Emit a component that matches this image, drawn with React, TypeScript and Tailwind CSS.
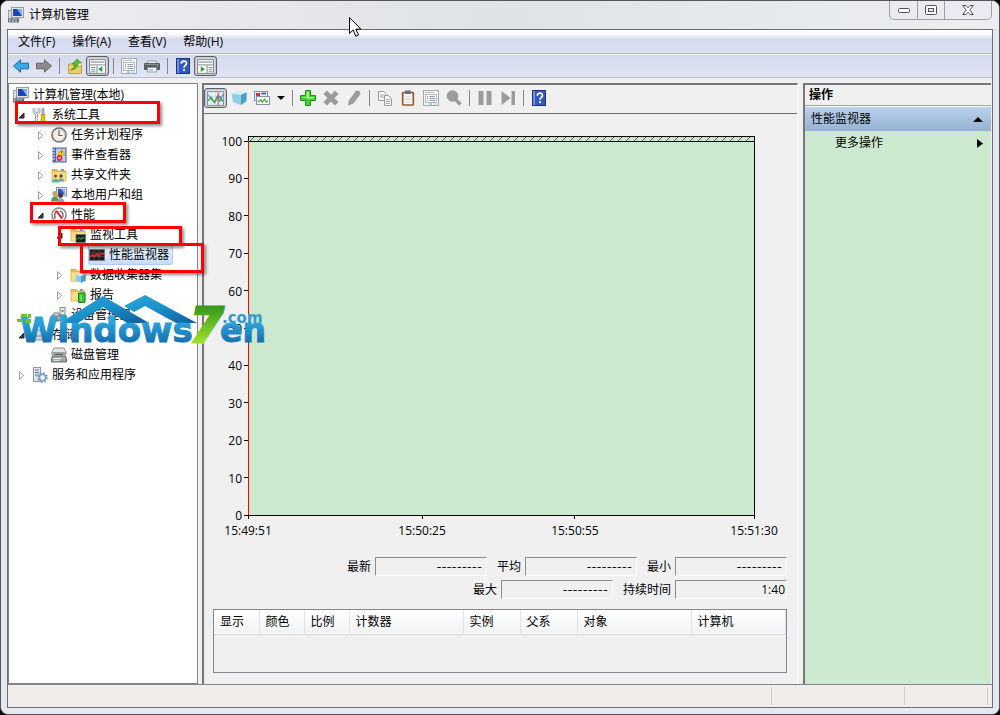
import type { ReactNode } from "react"

// ---------- icons ----------

const Svg = ({ children, size = 16 }: { children: ReactNode; size?: number }) => (
  <svg width={size} height={size} viewBox="0 0 16 16" className="shrink-0" aria-hidden="true">
    {children}
  </svg>
)

const ComputerIcon = () => (
  <Svg>
    <rect x="0.5" y="3.5" width="4" height="8" fill="#d8dde2" stroke="#9aa2a9" />
    <rect x="3.5" y="0.5" width="12" height="10" fill="#e4e7ea" stroke="#959ca3" />
    <rect x="5" y="2" width="9" height="7" fill="#1a45b4" />
    <path d="M9 2h5v7z" fill="#7fb0f5" />
    <path d="M7.500 10.500h4l1 1.500h-6z" fill="#a7b0b8" />
    <rect x="0" y="11.500" width="11" height="4" fill="#66717b" />
    <path d="M1 12.800h9M1 14.300h9" stroke="#d2d7dc" strokeDasharray="2 1" strokeWidth="0.800" />
  </Svg>
)

const ToolsIcon = () => (
  <Svg>
    <path d="M2 1v4l2.500 2L7 5V1M4.500 6.500V15" fill="none" stroke="#85898e" strokeWidth="2.600" />
    <path d="M2 1v4l2.500 2L7 5V1M4.500 6.500V15" fill="none" stroke="#eceeef" strokeWidth="1.200" />
    <path d="M11 0l1.500 2v6h-3V2z" fill="#a5aab0" />
    <path d="M9 7.500h4L12.500 10l.800 5h-4.600l.800-5z" fill="#f4b90a" stroke="#b57b00" strokeWidth="0.600" />
  </Svg>
)

const ClockIcon = () => (
  <Svg>
    <circle cx="8" cy="8" r="7.100" fill="#f5efdc" stroke="#6d7178" strokeWidth="1.500" />
    <circle cx="8" cy="8" r="5.700" fill="none" stroke="#c9cdd2" strokeWidth="0.900" />
    <path d="M8 3.200V8.500h3.500" fill="none" stroke="#4e6684" strokeWidth="1.200" />
  </Svg>
)

const EventIcon = () => (
  <Svg>
    <rect x="2" y="1" width="13" height="14" fill="#b9cdec" stroke="#3b5a94" />
    <rect x="2" y="1" width="3" height="14" fill="#4a6dac" />
    <path d="M1 3h3M1 6h3M1 9h3M1 12h3" stroke="#e6e9ee" />
    <path d="M10.500 1.500l3.800 6.500H6.700z" fill="#ffd21f" stroke="#b98700" strokeWidth="0.500" />
    <path d="M10.500 4v2.200" stroke="#333" strokeWidth="0.900" />
    <circle cx="8.500" cy="11" r="2.900" fill="#d8262c" />
    <path d="M7.300 9.800l2.400 2.400M9.700 9.800l-2.400 2.400" stroke="#fff" strokeWidth="0.900" />
  </Svg>
)

const FolderShape = () => (
  <>
    <path d="M1 2.500h5l1 1.500h8v10H1z" fill="#e6bd55" stroke="#c39b46" strokeWidth="0.700" />
    <path d="M1.400 5.200h13.200v8.500H1.400z" fill="#f8dd8b" />
    <path d="M10 2h3v2h-3z" fill="#5fa7dc" />
  </>
)

const SharedIcon = () => (
  <Svg>
    <FolderShape />
    <circle cx="4.500" cy="9" r="1.700" fill="#8a5a2e" />
    <path d="M1 15.500c0-5 7-5 7 0z" fill="#57b894" />
    <circle cx="10" cy="9" r="1.700" fill="#6d4321" />
    <path d="M7 14.500c0-4.500 6-4.500 6 0z" fill="#6fa8a0" />
  </Svg>
)

const UsersIcon = () => (
  <Svg>
    <rect x="5.500" y="0.500" width="10" height="8.500" fill="#dfe4ea" stroke="#8a929b" />
    <rect x="7" y="2" width="7" height="5.500" fill="#2457c5" />
    <path d="M10 2h4v5.500z" fill="#86b3f2" />
    <circle cx="4" cy="6.500" r="2.600" fill="#c9a066" />
    <path d="M0 14.500c0-7 8-7 8 0z" fill="#5c9a58" />
    <circle cx="9.500" cy="8.500" r="2.400" fill="#4b3527" />
    <path d="M6 15.500c0-6 7.500-6 7.500 0z" fill="#8fa7b4" />
  </Svg>
)

const GaugeIcon = () => (
  <Svg>
    <circle cx="8" cy="8" r="7.100" fill="#fff" stroke="#85898e" strokeWidth="1.500" />
    <path d="M4.200 11.500C3 8 4 4.500 6 4" fill="none" stroke="#b33" strokeWidth="1.400" />
    <path d="M5.500 4l5.500 7.500" stroke="#d11f1f" strokeWidth="2" />
    <path d="M9 4c3 .500 3.500 4 2.800 6.500" fill="none" stroke="#555" strokeWidth="1.200" />
  </Svg>
)

const FolderChartIcon = () => (
  <Svg>
    <FolderShape />
    <rect x="6" y="7.500" width="9.500" height="8" fill="#14201a" stroke="#6e7479" strokeWidth="0.700" />
    <path d="M7 12.500l2-2 2 2 1.500-2.500 2 2" fill="none" stroke="#35d04a" />
  </Svg>
)

const MonitorIcon = () => (
  <Svg>
    <rect x="0.500" y="2.500" width="15" height="11" fill="#221a1c" stroke="#7c7c80" />
    <path d="M1 6h14M1 9.500h14M5 3v10M10 3v10" stroke="#6c5a5c" strokeWidth="0.600" />
    <path d="M1 10l2.500-2 2 1.500L8 7l2 2 2.500-2.500L15 7" fill="none" stroke="#ea2b33" strokeWidth="1.400" />
  </Svg>
)

const FolderCubeIcon = () => (
  <Svg>
    <FolderShape />
    <path d="M6 8l5-1.500L15.500 8v5.500L11 15.800 6 14z" fill="#8cc9ea" />
    <path d="M6 8l5 1.300L15.500 8 11 6.500z" fill="#dff3fb" />
    <path d="M11 9.300v6.500l4.500-2.300V8z" fill="#4a9cc8" />
  </Svg>
)

const ReportIcon = () => (
  <Svg>
    <FolderShape />
    <rect x="8.500" y="6" width="6.500" height="9.500" rx="0.500" fill="#35c935" stroke="#137d1b" />
    <path d="M10 8h2v6h-2z" fill="#62dd5a" />
  </Svg>
)

const DeviceIcon = () => (
  <Svg>
    <rect x="9" y="0.500" width="5" height="8" fill="#e5e8ea" stroke="#8b9196" />
    <path d="M10.500 3h2v2h-2z" fill="#4cae4f" />
    <path d="M1 8h13l1.500 3v3H.500v-3z" fill="#a3a9af" stroke="#666c72" />
    <path d="M3 6h5v3H3zM3 13h9" fill="#dfe3e6" stroke="#71777d" />
  </Svg>
)

const StorageIcon = () => (
  <Svg>
    <path d="M3 3h10l2 6v4H1V9z" fill="#d3d8dd" stroke="#858b91" />
    <path d="M1 9h14" stroke="#858b91" />
    <circle cx="12.500" cy="11" r="1" fill="#39b54a" />
  </Svg>
)

const DiskIcon = () => (
  <Svg>
    <path d="M3 1h10l2 4v3H1V5z" fill="#e3e6e8" stroke="#8a9095" />
    <path d="M1.500 6h13M4 7.500h8" stroke="#53585d" />
    <path d="M1.500 9h13l1 2.500V15H.500v-3.500z" fill="#9ca2a7" stroke="#6a7075" />
    <path d="M2.500 11.500h8M2.500 13.300h6" stroke="#eef0f2" />
    <circle cx="13" cy="12.800" r="0.900" fill="#5fe05f" />
  </Svg>
)

const ServicesIcon = () => (
  <Svg>
    <rect x="1.500" y="0.500" width="7" height="14" fill="#dfe3e7" stroke="#8f969c" />
    <path d="M3 3h4M3 5.500h4M3 8h4" stroke="#5f7d99" />
    <circle cx="10.500" cy="10.500" r="3.200" fill="#fff" stroke="#7ba4cf" strokeWidth="2" />
    <circle cx="10.500" cy="10.500" r="4.700" fill="none" stroke="#6a93bf" strokeWidth="1.400" strokeDasharray="1.800 1.900" />
  </Svg>
)

const ArrowIcon = ({ back }: { back?: boolean }) => (
  <Svg>
    {back ? (
      <path d="M0.500 8L7.500 1.800v3.400h8v5.600h-8v3.400z" fill="#3fa9e8" stroke="#1d6aa8" />
    ) : (
      <path d="M15.500 8l-7-6.200v3.400h-8v5.600h8v3.400z" fill="#8c8c8c" stroke="#686868" />
    )}
  </Svg>
)

const FolderUpIcon = () => (
  <Svg>
    <path d="M1.500 6h4l1 1.500h8v8h-13z" fill="#f3ce6f" stroke="#c39a3f" />
    <path d="M10 4.500h4.500v4H10z" fill="#f8e3a3" stroke="#c39a3f" strokeWidth="0.700" />
    <path d="M3.500 12c3-1 4-3.500 4-6H5l5-5 4 3.500-3 1C11 9.500 8 12 3.500 12z" fill="#57bf33" stroke="#2f8a1c" strokeWidth="0.600" />
  </Svg>
)

const PaneIcon = ({ right }: { right?: boolean }) => (
  <Svg size={17}>
    <rect x="0.500" y="1.500" width="15" height="13" fill="#fff" stroke="#8a9098" />
    <path d="M1.500 3.800h13" stroke="#a7adb5" strokeWidth="1.500" />
    <path d="M0.500 6.500h15" stroke="#8a9098" />
    {right ? (
      <>
        <path d="M9.500 7v7" stroke="#8a9098" />
        <path d="M3.500 7.800v5.400l4-2.700z" fill="#28a428" />
        <path d="M11 9h3.500M11 11h3.500M11 13h3.500" stroke="#8a9098" />
      </>
    ) : (
      <>
        <path d="M7.500 7v7" stroke="#8a9098" />
        <path d="M12.500 7.800v5.400l-4-2.700z" fill="#28a428" />
        <path d="M2 9h4M2 11h4M2 13h4" stroke="#8a9098" />
      </>
    )}
  </Svg>
)

const PropertiesIcon = () => (
  <Svg>
    <rect x="0.500" y="0.500" width="15" height="15" fill="#fafafa" stroke="#a4a9ae" />
    <path d="M2 2.500h9" stroke="#b8bdc2" />
    <rect x="2.500" y="4.500" width="11" height="8" fill="#fff" stroke="#a0a8b0" strokeWidth="0.800" />
    <path d="M4 6.500h1M6.500 6.500H12M4 8.500h1M6.500 8.500H12M4 10.500h1M6.500 10.500H12" stroke="#8b9db4" />
    <path d="M6 14h3" stroke="#2cb6d8" />
    <path d="M10.500 14h3" stroke="#9fc6d8" />
  </Svg>
)

const PrinterIcon = () => (
  <Svg>
    <path d="M3.500 3h9v4h-9z" fill="#f4f4f4" stroke="#9a9a9a" />
    <path d="M0.500 5.500h15v6H.500z" fill="#5a5d62" stroke="#414449" strokeWidth="0.700" />
    <path d="M1 6.500h14" stroke="#8b8e93" />
    <path d="M3.500 9.500h9v4.500h-9z" fill="#f2f7fb" stroke="#8c9299" strokeWidth="0.800" />
    <path d="M5 12h4" stroke="#42b0dc" />
    <circle cx="13.500" cy="8.300" r="0.700" fill="#4ddc4d" />
  </Svg>
)

const HelpIcon = () => (
  <Svg>
    <rect x="1.500" y="0.500" width="13" height="15" fill="#3258c4" stroke="#1c3583" />
    <path d="M2 1h2v14H2z" fill="#6f8fe0" />
    <path d="M6.300 5.800c0-3.600 5.200-3.400 5.200-.400 0 2-2.500 2-2.500 4.300" fill="none" stroke="#fff" strokeWidth="1.700" />
    <rect x="8.100" y="11.200" width="1.900" height="1.900" fill="#fff" />
  </Svg>
)

const LineGraphIcon = () => (
  <Svg size={17}>
    <rect x="0.500" y="1.500" width="15" height="13" fill="#eef5fc" stroke="#6c9bd0" />
    <path d="M4 2v12M8 2v12M12 2v12M1 6h14M1 10h14" stroke="#b8d2ec" strokeWidth="0.600" />
    <path d="M1 4l3 5 3 2 3-6 2 6 3-7" fill="none" stroke="#4a7cc8" strokeWidth="0.900" />
    <path d="M1 10l3-3 3 5 3-5 2-1 3 5" fill="none" stroke="#3faa3a" strokeWidth="1.300" />
    <path d="M10.500 2v12" stroke="#e04040" />
  </Svg>
)

const CubeIcon = () => (
  <Svg>
    <path d="M0.500 3.500L6 1.500l9.500 1v8.500L10 15 2 12z" fill="#8fcfe8" />
    <path d="M0.500 3.500L6 1.500l9.500 1L10 5z" fill="#d3eff9" />
    <path d="M10 5l5.500-2.500v8.500L10 15z" fill="#4a9fc4" />
  </Svg>
)

const PictureIcon = () => (
  <Svg>
    <rect x="0.500" y="1.500" width="13" height="9" fill="#dfe8f8" stroke="#7d93c2" />
    <path d="M2 3h4v3H2z" fill="#d32f2f" />
    <path d="M7.500 3.500h4.500" stroke="#2c4fb0" strokeWidth="1.500" />
    <rect x="2.500" y="6.500" width="13" height="8" fill="#f6faf2" stroke="#8494a8" />
    <path d="M4 12l2.500-2 2 2 2-3 2 3 1.500-1" fill="none" stroke="#4aa83d" strokeWidth="1.200" />
  </Svg>
)

const PlusIcon = () => (
  <Svg>
    <path d="M5.500 0.500h5v5h5v5h-5v5h-5v-5h-5v-5h5z" fill="#3fd02b" stroke="#149a12" />
    <path d="M6.500 1.500H9V7h5v1.500H7L6.500 8H2V7h4.500z" fill="#a4f08e" />
  </Svg>
)

const DeleteIcon = () => (
  <Svg>
    <path d="M2.200 2.200l11.600 11.600M13.800 2.200L2.200 13.800" stroke="#9b9b9b" strokeWidth="5" />
  </Svg>
)

const PencilIcon = () => (
  <Svg>
    <path d="M2 15.500l.800-5L10 .800l3.500.300 1 3-7 9.500z" fill="#9b9b9b" />
  </Svg>
)

const CopyIcon = () => (
  <Svg>
    <path d="M1.500 1.500h5l2 2v7h-7z" fill="#f7f7f7" stroke="#9a9a9a" />
    <path d="M3 5h4M3 7h4" stroke="#a8a8a8" />
    <path d="M7.500 5.500h4l3 3v7h-7z" fill="#f7f7f7" stroke="#9a9a9a" />
    <path d="M9 9.500h4M9 11.500h4M9 13.500h4" stroke="#a8a8a8" />
  </Svg>
)

const ClipboardIcon = () => (
  <Svg>
    <rect x="2.700" y="2.500" width="10.600" height="12.500" rx="0.500" fill="#fff" stroke="#9a5523" strokeWidth="1.700" />
    <rect x="5" y="0.500" width="6" height="3.500" rx="0.500" fill="#6a6f75" />
    <path d="M5 7h6M5 9.500h6M5 12h6" stroke="#c4cad1" />
  </Svg>
)

const ZoomIcon = () => (
  <Svg>
    <circle cx="6.500" cy="6" r="5.800" fill="#9b9b9b" />
    <path d="M9.500 9.500l5 5" stroke="#9b9b9b" strokeWidth="3.400" />
  </Svg>
)

const PauseIcon = () => (
  <Svg>
    <path d="M1.500 1h5v14h-5zM9.500 1h5v14h-5z" fill="#9b9b9b" />
  </Svg>
)

const StepIcon = () => (
  <Svg>
    <path d="M1.500 1l9 7-9 7zM11.500 1H15v14h-3.500z" fill="#9b9b9b" />
  </Svg>
)

// ---------- small parts ----------

const ToolButton = ({ label, pressed, children }: { label: string; pressed?: boolean; children: ReactNode }) => (
  <button
    type="button"
    aria-label={label}
    aria-pressed={pressed}
    className={`flex h-5 w-[23px] shrink-0 items-center justify-center ${
      pressed ? "rounded-[3px] border border-[#5f6268] bg-[#dcdfe8] shadow-[inset_0_0_2px_#8a8d94]" : ""
    }`}
  >
    {children}
  </button>
)

const Separator = () => (
  <div className="flex w-2 shrink-0 justify-center">
    <div className="h-4 w-px bg-[#84868c]" />
  </div>
)

type Node = {
  level: number
  label: string
  icon: ReactNode
  state?: "open" | "closed"
  selected?: boolean
}

const nodes: Node[] = [
  { level: 0, label: "计算机管理(本地)", icon: <ComputerIcon /> },
  { level: 1, label: "系统工具", icon: <ToolsIcon />, state: "open" },
  { level: 2, label: "任务计划程序", icon: <ClockIcon />, state: "closed" },
  { level: 2, label: "事件查看器", icon: <EventIcon />, state: "closed" },
  { level: 2, label: "共享文件夹", icon: <SharedIcon />, state: "closed" },
  { level: 2, label: "本地用户和组", icon: <UsersIcon />, state: "closed" },
  { level: 2, label: "性能", icon: <GaugeIcon />, state: "open" },
  { level: 3, label: "监视工具", icon: <FolderChartIcon />, state: "open" },
  { level: 4, label: "性能监视器", icon: <MonitorIcon />, selected: true },
  { level: 3, label: "数据收集器集", icon: <FolderCubeIcon />, state: "closed" },
  { level: 3, label: "报告", icon: <ReportIcon />, state: "closed" },
  { level: 2, label: "设备管理器", icon: <DeviceIcon /> },
  { level: 1, label: "存储", icon: <StorageIcon />, state: "open" },
  { level: 2, label: "磁盘管理", icon: <DiskIcon /> },
  { level: 1, label: "服务和应用程序", icon: <ServicesIcon />, state: "closed" },
]

const indents = ["w-0.5", "w-[21px] pr-1.5", "w-10 pr-1.5", "w-[59px] pr-1.5", "w-[78px] pr-1.5"]

function TreeRow({ node }: { node: Node }) {
  return (
    <li className="flex h-5 items-center">
      <div className={`flex shrink-0 justify-end ${indents[node.level]}`}>
        {node.state === "open" && (
          <svg width="7" height="7" className="shrink-0">
            <path d="M6 1v5H1z" fill="#3a3a3a" stroke="#262626" />
          </svg>
        )}
        {node.state === "closed" && (
          <svg width="7" height="9" className="shrink-0">
            <path d="M1.500 0.700v7.600L5.800 4.500z" fill="#fff" stroke="#a0a0a0" />
          </svg>
        )}
      </div>
      <div
        className={`flex h-5 items-center gap-1 rounded-[2px] border pr-[3px] whitespace-nowrap ${
          node.selected ? "border-[#b3cdf0] bg-linear-to-b from-[#eaf2fd] to-[#c8dcf6]" : "border-transparent"
        }`}
      >
        {node.icon}
        <span>{node.label}</span>
      </div>
    </li>
  )
}

const yTicks = [100, 90, 80, 70, 60, 50, 40, 30, 20, 10, 0]
const xTicks = [
  { at: "0%", label: "15:49:51" },
  { at: "34.4%", label: "15:50:25" },
  { at: "64.6%", label: "15:50:55" },
  { at: "100%", label: "15:51:30" },
]

function Chart() {
  return (
    <svg className="block min-h-[340px] w-full flex-1 overflow-visible" role="img" aria-label="性能监视器">
      <defs>
        <pattern id="hatch" width="8" height="6" patternUnits="userSpaceOnUse">
          <path d="M1 6L7 0" stroke="#3c4a3e" strokeWidth="0.900" />
        </pattern>
      </defs>
      <rect x="0" y="0" width="100%" height="100%" fill="#cce8cf" />
      <svg y="-5" width="100%" height="6">
        <rect width="100%" height="6" fill="#cce8cf" />
        <rect width="100%" height="6" fill="url(#hatch)" />
      </svg>
      <g stroke="#000" shapeRendering="crispEdges">
        <line x1="0" x2="100%" y1="-5" y2="-5" />
        <line x1="0" x2="100%" y1="0" y2="0" />
        <line x1="100%" x2="100%" y1="-5" y2="100%" />
        <line x1="0" x2="100%" y1="100%" y2="100%" />
        <line x1="0" x2="0" y1="-5" y2="0" />
      </g>
      {yTicks.map((tick) => (
        <g key={tick}>
          <line x1="-4" x2="0" y1={`${100 - tick}%`} y2={`${100 - tick}%`} stroke="#000" shapeRendering="crispEdges" />
          <text x="-6" y={`${100 - tick}%`} dy="5" textAnchor="end">
            {tick}
          </text>
        </g>
      ))}
      <line x1="0" x2="0" y1="0" y2="100%" stroke="#f00" shapeRendering="crispEdges" />
      {xTicks.map((tick) => (
        <svg key={tick.label} x={tick.at} y="100%" className="overflow-visible">
          <line x1="0" x2="0" y1="0" y2="4" stroke="#000" shapeRendering="crispEdges" />
          <text x="0" y="20" textAnchor="middle">
            {tick.label}
          </text>
        </svg>
      ))}
    </svg>
  )
}

function Stat({ id, label, value }: { id: string; label: string; value: string }) {
  const dashes = value.startsWith("-")
  return (
    <div className="flex items-center gap-1">
      <label htmlFor={id} className="whitespace-nowrap">
        {label}
      </label>
      <input
        id={id}
        readOnly
        value={value}
        className={`h-[19px] w-28 border border-t-[#8c8c8c] border-r-white border-b-white border-l-[#8c8c8c] text-right outline-none ${
          dashes ? "pr-1 font-[Inter] text-[11px]" : "pr-px"
        }`}
      />
    </div>
  )
}

const columns = [
  { label: "显示", width: "w-[45px]" },
  { label: "颜色", width: "w-[45px]" },
  { label: "比例", width: "w-[45px]" },
  { label: "计数器", width: "w-[114px]" },
  { label: "实例", width: "w-[57px]" },
  { label: "父系", width: "w-[57px]" },
  { label: "对象", width: "w-[114px]" },
  { label: "计算机", width: "" },
]

const menus = ["文件(F)", "操作(A)", "查看(V)", "帮助(H)"]

function Watermark() {
  return (
    <svg
      width="252"
      height="60"
      viewBox="0 0 252 60"
      className="pointer-events-none absolute top-[202px] left-2 overflow-visible"
      fontFamily="DejaVu Sans, sans-serif"
      fontWeight="bold"
    >
      <defs>
        <linearGradient id="roof" x1="0" y1="0" x2="1" y2="1">
          <stop offset="0" stopColor="#2fa3d8" />
          <stop offset="0.450" stopColor="#1b93cc" />
          <stop offset="1" stopColor="#0e5c9c" />
        </linearGradient>
        <linearGradient id="word" x1="0" y1="0" x2="0" y2="1">
          <stop offset="0.300" stopColor="#2ba3dc" />
          <stop offset="1" stopColor="#0f5c9e" />
        </linearGradient>
        <linearGradient id="seven" x1="0" y1="0" x2="0" y2="1">
          <stop offset="0.200" stopColor="#3a9a1c" />
          <stop offset="0.850" stopColor="#a4e62a" />
        </linearGradient>
      </defs>
      <path d="M108 21l21-11 52 28h-21l-31-17-11 6z" fill="url(#roof)" />
      <path d="M44 38l43-27 46 27h-22L87 22 62 38z" fill="url(#roof)" />
      <text x="4" y="57" fontSize="34" fill="url(#word)" stroke="url(#word)">
        Windows
      </text>
      <path d="M5 29h6v3H5zM12 29h3v4h-3zM1 34h6v3H1zM9 34h6v4H9z" fill="#6cc136" />
      <text x="174" y="57" fontSize="48" fontStyle="italic" fill="url(#seven)" stroke="url(#seven)" strokeWidth="3">
        7
      </text>
      <text x="204" y="57" fontSize="33" fill="url(#word)" stroke="url(#word)">
        en
      </text>
      <text x="206" y="38" fontSize="15" fill="#2f9bd4">
        .com
      </text>
    </svg>
  )
}

export default function App() {
  return (
    <div className="min-h-screen bg-black">
      <div className="relative flex min-h-screen flex-col rounded-lg border border-[#55565c] bg-[#e6e8ef] px-1.5 pb-1.5 font-['Open_Sans','Noto_Sans_CJK_SC',sans-serif] text-xs leading-5 text-black">
        {/* Title bar */}
        <header className="-mx-1.5 flex h-7 shrink-0 items-start justify-between rounded-t-lg bg-linear-to-r from-[#ededf2] via-[#dfe2e6] to-[#eceef2] px-[7px]">
          <div className="flex items-center gap-[5px] pt-1">
            <ComputerIcon />
            <h1>计算机管理</h1>
          </div>
          <div className="flex h-[19px] divide-x divide-[#9da0ab] overflow-hidden rounded-b-[5px] border border-t-0 border-[#9da0ab] bg-[#e9ebf0]">
            <button type="button" aria-label="最小化" className="flex w-7 items-center justify-center">
              <svg width="12" height="5">
                <rect x="0.500" y="0.500" width="11" height="4" rx="1" fill="#fff" stroke="#50535e" />
              </svg>
            </button>
            <button type="button" aria-label="最大化" className="flex w-[27px] items-center justify-center">
              <svg width="12" height="10">
                <rect x="0.500" y="0.500" width="11" height="9" rx="1" fill="#fff" stroke="#50535e" />
                <rect x="3.500" y="3.500" width="5" height="3" fill="#e9ebf0" stroke="#50535e" />
              </svg>
            </button>
            <button type="button" aria-label="关闭" className="flex w-[46px] items-center justify-center">
              <svg width="12" height="10">
                <path
                  d="M.700.500h3.200L6 2.800 8.100.500h3.200L7.800 5l3.500 4.500H8.100L6 7.200 3.900 9.500H.700L4.200 5z"
                  fill="#fff"
                  stroke="#50535e"
                />
              </svg>
            </button>
          </div>
        </header>

        <div className="flex flex-1 flex-col border border-[#6b6d75] bg-[#f0f0f0]">
          {/* Menu bar */}
          <nav className="flex h-6 shrink-0 items-center gap-[17px] border-b border-[#b3b6c6] bg-linear-to-b from-white from-15% via-[#d4daed] via-40% to-[#dbe1f2] pl-2.5">
            {menus.map((menu) => (
              <button key={menu} type="button" className="whitespace-nowrap">
                {menu}
              </button>
            ))}
          </nav>

          {/* Toolbar */}
          <div className="flex h-6 shrink-0 items-center border-y border-t-white border-b-[#b9bccb] bg-linear-to-b from-[#d3d9ec] to-[#e1e6f5] pl-px">
            <ToolButton label="后退"><ArrowIcon back /></ToolButton>
            <ToolButton label="前进"><ArrowIcon /></ToolButton>
            <Separator />
            <ToolButton label="上一级"><FolderUpIcon /></ToolButton>
            <ToolButton label="显示/隐藏控制台树" pressed><PaneIcon /></ToolButton>
            <Separator />
            <ToolButton label="属性"><PropertiesIcon /></ToolButton>
            <ToolButton label="打印"><PrinterIcon /></ToolButton>
            <Separator />
            <ToolButton label="帮助"><HelpIcon /></ToolButton>
            <ToolButton label="显示/隐藏操作窗格" pressed><PaneIcon right /></ToolButton>
          </div>

          <div className="relative mt-[5px] flex flex-1 gap-1 pr-px">
            {/* Console tree */}
            <aside className="w-[190px] shrink-0 border border-[#80848c] bg-white pt-px pl-px">
              <ul>
                {nodes.map((node) => (
                  <TreeRow key={node.label} node={node} />
                ))}
              </ul>
            </aside>

            {/* Performance monitor */}
            <main className="flex min-w-0 flex-1 flex-col border-t-2 border-r border-l-2 border-t-[#777] border-r-white border-l-[#777]">
              <div className="flex h-[29px] shrink-0 items-center border-b border-[#6e6e6e] pb-0.5">
                <ToolButton label="查看当前活动" pressed><LineGraphIcon /></ToolButton>
                <ToolButton label="查看日志数据"><CubeIcon /></ToolButton>
                <ToolButton label="更改图形类型"><PictureIcon /></ToolButton>
                <button type="button" aria-label="图形类型" className="flex w-[15px] justify-center">
                  <svg width="8" height="4">
                    <path d="M0 0h8L4 4z" />
                  </svg>
                </button>
                <Separator />
                <ToolButton label="添加"><PlusIcon /></ToolButton>
                <ToolButton label="删除"><DeleteIcon /></ToolButton>
                <ToolButton label="突出显示"><PencilIcon /></ToolButton>
                <Separator />
                <ToolButton label="复制属性"><CopyIcon /></ToolButton>
                <ToolButton label="粘贴计数器列表"><ClipboardIcon /></ToolButton>
                <ToolButton label="计数器属性"><PropertiesIcon /></ToolButton>
                <ToolButton label="缩放"><ZoomIcon /></ToolButton>
                <Separator />
                <ToolButton label="冻结显示"><PauseIcon /></ToolButton>
                <ToolButton label="更新数据"><StepIcon /></ToolButton>
                <Separator />
                <ToolButton label="监视器帮助"><HelpIcon /></ToolButton>
              </div>

              <div className="flex flex-1 flex-col pt-[27px] pr-[43px] pl-11">
                <Chart />
              </div>

              <div className="mt-[42px] flex flex-col gap-1 pr-2.5">
                <div className="flex h-[19px] items-center justify-end gap-2.5">
                  <Stat id="last" label="最新" value="---------" />
                  <Stat id="average" label="平均" value="---------" />
                  <Stat id="minimum" label="最小" value="---------" />
                </div>
                <div className="flex h-[19px] items-center justify-end gap-2.5">
                  <Stat id="maximum" label="最大" value="---------" />
                  <Stat id="duration" label="持续时间" value="1:40" />
                </div>
              </div>

              <div className="mt-2.5 mr-2.5 mb-[11px] ml-[9px] h-16 border border-[#828790]">
                <table className="w-full table-fixed text-left">
                  <thead>
                    <tr className="h-6 border-b border-[#d5d5d5] bg-linear-to-b from-white to-[#f1f2f4]">
                      {columns.map((column) => (
                        <th
                          key={column.label}
                          className={`border-r border-[#dfe2e6] p-0 pl-1.5 font-normal ${column.width}`}
                        >
                          {column.label}
                        </th>
                      ))}
                    </tr>
                  </thead>
                  <tbody />
                </table>
              </div>
            </main>

            {/* Actions */}
            <aside className="ml-px w-[188px] shrink-0 border-t-2 border-l-2 border-[#777] bg-[#cce8cf]">
              <h2 className="h-[21px] border-b border-[#a0a0a0] bg-[#f0f0f0] pl-1 font-bold">操作</h2>
              <button
                type="button"
                className="flex h-[25px] w-full items-center justify-between border-t border-white bg-linear-to-b from-[#b9d1ea] to-[#96b1d3] pr-2 pl-1.5"
              >
                性能监视器
                <svg width="10" height="5">
                  <path d="M0 5h10L5 0z" />
                </svg>
              </button>
              <button type="button" className="flex h-6 w-full items-center justify-between pr-2 pl-[30px]">
                更多操作
                <svg width="6" height="9">
                  <path d="M0 0v9l6-4.500z" />
                </svg>
              </button>
            </aside>

            {/* Highlight boxes over the path to the monitor */}
            <div className="pointer-events-none absolute top-[18px] left-[7px] h-[23px] w-[145px] border-3 border-[#f00] shadow-[2px_2px_3px_rgba(0,0,0,0.45)]" />
            <div className="pointer-events-none absolute top-[119px] left-[22px] h-[21px] w-24 border-3 border-[#f00] shadow-[2px_2px_3px_rgba(0,0,0,0.45)]" />
            <div className="pointer-events-none absolute top-[143px] left-[50px] h-5 w-[124px] border-3 border-[#f00] shadow-[2px_2px_3px_rgba(0,0,0,0.45)]" />
            <div className="pointer-events-none absolute top-[160px] left-[72px] h-[30px] w-[124px] border-3 border-[#f00] shadow-[2px_2px_3px_rgba(0,0,0,0.45)]" />
            <Watermark />
          </div>

          {/* Status bar */}
          <footer className="flex h-[23px] shrink-0 justify-end border-t border-[#80848c] bg-[#f0edeb] py-0.5 pr-1">
            <div className="w-[133px] border-l border-[#d0cdcb]" />
            <div className="w-[84px] border-x border-[#d0cdcb]" />
          </footer>
        </div>

        {/* Mouse pointer */}
        <svg width="13" height="21" className="pointer-events-none absolute top-4 left-[348px]">
          <path d="M.500.500v16l3.700-3.500 2.600 6.300 2.700-1.200-2.600-6h5z" fill="#fff" stroke="#000" />
        </svg>
      </div>
    </div>
  )
}
